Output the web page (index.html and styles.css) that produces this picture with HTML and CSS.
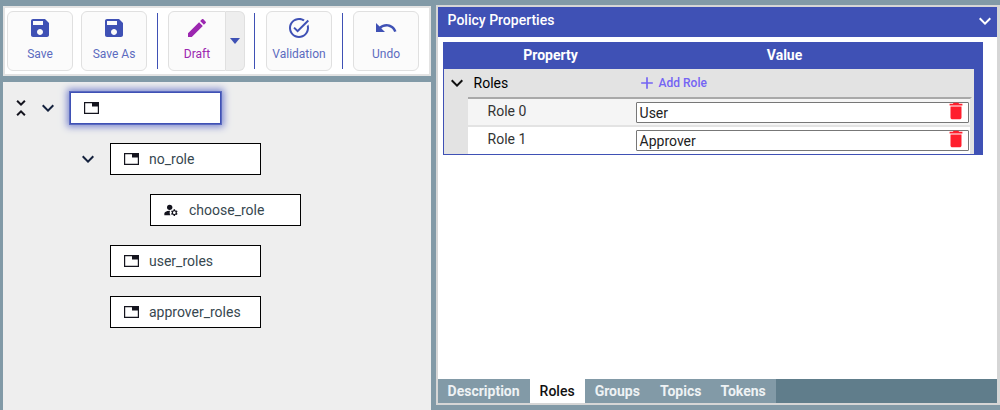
FILE: index.html
```html
<!DOCTYPE html>
<html lang="en">
<head>
  <meta charset="UTF-8" />
  <title>Policy Editor</title>
  <link rel="stylesheet" href="styles.css">
</head>
<body>
  <svg class="defs" width="0" height="0">
    <symbol id="i-save" viewBox="0 0 24 24"><path d="M17 3H5c-1.11 0-2 .9-2 2v14c0 1.1.89 2 2 2h14c1.1 0 2-.9 2-2V7l-4-4zm-5 16c-1.66 0-3-1.34-3-3s1.34-3 3-3 3 1.34 3 3-1.34 3-3 3zm3-10H5V5h10v4z"/></symbol>
    <symbol id="i-edit" viewBox="0 0 24 24"><path d="M3 17.25V21h3.75L17.81 9.94l-3.75-3.75L3 17.25zM20.71 7.04c.39-.39.39-1.02 0-1.41l-2.34-2.34c-.39-.39-1.02-.39-1.41 0l-1.83 1.83 3.75 3.75 1.83-1.83z"/></symbol>
    <symbol id="i-check" viewBox="0 0 24 24"><path d="M22 5.18L10.59 16.6l-4.24-4.24 1.41-1.41 2.83 2.83 10-10L22 5.18zm-2.21 5.04c.13.57.21 1.17.21 1.78 0 4.42-3.58 8-8 8s-8-3.58-8-8 3.58-8 8-8c1.58 0 3.04.46 4.28 1.25l1.44-1.44C16.1 2.67 14.13 2 12 2 6.48 2 2 6.48 2 12s4.48 10 10 10 10-4.48 10-10c0-1.19-.22-2.33-.6-3.39l-1.61 1.61z"/></symbol>
    <symbol id="i-undo" viewBox="0 0 24 24"><path d="M12.5 8c-2.65 0-5.05.99-6.9 2.6L2 7v9h9l-3.62-3.62c1.39-1.16 3.16-1.88 5.12-1.88 3.54 0 6.55 2.31 7.6 5.5l2.37-.78C21.08 11.03 17.15 8 12.5 8z"/></symbol>
    <symbol id="i-chevron" viewBox="0 0 24 24"><path d="M16.59 8.59L12 13.17 7.41 8.59 6 10l6 6 6-6z"/></symbol>
    <symbol id="i-collapse" viewBox="0 0 24 24"><path d="M7.41 18.59L8.83 20 12 16.83 15.17 20l1.41-1.41L12 14l-4.59 4.59zm9.18-13.18L15.17 4 12 7.17 8.83 4 7.41 5.41 12 10l4.59-4.59z"/></symbol>
    <symbol id="i-add" viewBox="0 0 24 24"><path d="M19 13h-6v6h-2v-6H5v-2h6V5h2v6h6v2z"/></symbol>
    <symbol id="i-delete" viewBox="0 0 24 24"><path d="M6 19c0 1.1.9 2 2 2h8c1.1 0 2-.9 2-2V7H6v12zM19 4h-3.5l-1-1h-5l-1 1H5v2h14V4z"/></symbol>
    <symbol id="i-node" viewBox="0 0 15 12"><path d="M0 0h15v12H0zM1.2 1.2v9.6h12.6V4.5H8V1.2z" fill-rule="evenodd"/></symbol>
    <symbol id="i-manage" viewBox="0 0 24 24"><circle cx="10" cy="8" r="4"/><path d="M10.67 13.02c-.22-.01-.44-.02-.67-.02-2.42 0-4.68.67-6.61 1.82-.88.52-1.39 1.5-1.39 2.53V20h9.26c-.79-1.13-1.26-2.51-1.26-4 0-1.07.25-2.07.67-2.98z"/><path d="M20.75 16c0-.22-.03-.42-.06-.63l1.14-1.01-1-1.73-1.45.49c-.32-.27-.68-.48-1.08-.63L18 11h-2l-.3 1.49c-.4.15-.76.36-1.08.63l-1.45-.49-1 1.73 1.14 1.01c-.03.21-.06.41-.06.63s.03.42.06.63l-1.14 1.01 1 1.73 1.45-.49c.32.27.68.48 1.08.63L16 21h2l.3-1.49c.4-.15.76-.36 1.08-.63l1.45.49 1-1.73-1.14-1.01c.03-.21.06-.41.06-.63zM17 18c-1.1 0-2-.9-2-2s.9-2 2-2 2 .9 2 2-.9 2-2 2z"/></symbol>
  </svg>

  <div class="left">
    <div class="toolbar">
      <button class="tool"><svg class="tool-icon"><use href="#i-save"/></svg>Save</button>
      <button class="tool"><svg class="tool-icon"><use href="#i-save"/></svg>Save As</button>
      <span class="sep"></span>
      <div class="split">
        <button class="tool tool-draft"><svg class="tool-icon"><use href="#i-edit"/></svg>Draft</button>
        <button class="split-arrow"><span class="caret"></span></button>
      </div>
      <span class="sep"></span>
      <button class="tool"><svg class="tool-icon"><use href="#i-check"/></svg>Validation</button>
      <span class="sep"></span>
      <button class="tool"><svg class="tool-icon"><use href="#i-undo"/></svg>Undo</button>
    </div>

    <div class="tree">
      <div class="tree-row">
        <svg class="collapse-all"><use href="#i-collapse"/></svg>
        <svg class="toggle"><use href="#i-chevron"/></svg>
        <div class="node node-selected"><svg class="node-icon"><use href="#i-node"/></svg></div>
      </div>
      <div class="tree-row level-1">
        <svg class="toggle"><use href="#i-chevron"/></svg>
        <div class="node"><svg class="node-icon"><use href="#i-node"/></svg>no_role</div>
      </div>
      <div class="tree-row level-2">
        <div class="node"><svg class="node-icon node-icon-role"><use href="#i-manage"/></svg>choose_role</div>
      </div>
      <div class="tree-row level-1b">
        <div class="node"><svg class="node-icon"><use href="#i-node"/></svg>user_roles</div>
      </div>
      <div class="tree-row level-1b">
        <div class="node"><svg class="node-icon"><use href="#i-node"/></svg>approver_roles</div>
      </div>
    </div>
  </div>

  <div class="props">
    <div class="props-head">
      <span>Policy Properties</span>
      <svg class="props-chevron"><use href="#i-chevron"/></svg>
    </div>
    <div class="props-body">
      <div class="grid">
        <div class="grid-head">
          <div class="head-prop">Property</div>
          <div class="head-value">Value</div>
        </div>
        <div class="group">
          <div class="group-row">
            <svg class="group-toggle"><use href="#i-chevron"/></svg>
            <span class="group-name">Roles</span>
            <span class="add-role"><svg class="add-icon"><use href="#i-add"/></svg>Add Role</span>
          </div>
          <div class="rows">
            <div class="row row-odd">
              <div class="row-name">Role 0</div>
              <div class="row-value">
                <div class="input"><span>User</span><svg class="trash"><use href="#i-delete"/></svg></div>
              </div>
            </div>
            <div class="row">
              <div class="row-name">Role 1</div>
              <div class="row-value">
                <div class="input"><span>Approver</span><svg class="trash"><use href="#i-delete"/></svg></div>
              </div>
            </div>
          </div>
        </div>
      </div>
    </div>
    <div class="tabs">
      <div class="tab">Description</div>
      <div class="tab tab-active">Roles</div>
      <div class="tab">Groups</div>
      <div class="tab">Topics</div>
      <div class="tab">Tokens</div>
    </div>
  </div>
</body>
</html>
```

FILE: styles.css
```css
html, body {
  height: 100%;
}

body {
  margin: 0;
  width: 1000px;
  height: 410px;
  overflow: hidden;
  display: flex;
  background: #829aa7;
  font-family: Roboto, sans-serif;
  font-size: 14px;
}

.defs {
  position: absolute;
}

.left {
  width: 428px;
  margin-left: 3px;
  padding-top: 6px;
  display: flex;
  flex-direction: column;
  gap: 6px;
}

/* toolbar */
.toolbar {
  height: 66px;
  border: 2px solid #e3e3e3;
  background: white;
  display: flex;
  align-items: center;
  padding-left: 2px;
}

.tool {
  width: 66px;
  height: 60px;
  margin-right: 8px;
  padding: 4px 0 0;
  display: flex;
  flex-direction: column;
  align-items: center;
  gap: 7px;
  border: 1px solid #e0e0e0;
  border-radius: 6px;
  background: #fbfbfb;
  color: #5c6bc0;
  font-family: Roboto, sans-serif;
  font-size: 12px;
}

.tool-icon {
  width: 24px;
  height: 24px;
  fill: #3f51b5;
}

.sep {
  width: 1px;
  height: 56px;
  background: #3f51b5;
  margin: 0 10px 0 2px;
}

.split {
  display: flex;
  margin-right: 7px;
}

.split + .sep {
  margin-right: 11px;
}

.tool-draft {
  width: 58px;
  margin: 0;
  border-radius: 6px 0 0 6px;
  color: #9c27b0;
}

.tool-draft .tool-icon {
  fill: #9c27b0;
}

.split-arrow {
  width: 19px;
  height: 60px;
  padding: 0 1px 0 0;
  border: 1px solid #e0e0e0;
  border-left: none;
  border-radius: 0 6px 6px 0;
  background: #eeeeee;
  display: flex;
  align-items: center;
  justify-content: center;
}

.caret {
  border-left: 5.5px solid transparent;
  border-right: 5.5px solid transparent;
  border-top: 6px solid #3f51b5;
}

/* tree */
.tree {
  flex: 1;
  background: #eeeeee;
  padding-top: 10px;
  display: flex;
  flex-direction: column;
  gap: 19px;
}

.tree-row {
  height: 32px;
  display: flex;
  align-items: center;
}

.level-1 {
  padding-left: 73px;
}

.level-2 {
  padding-left: 147px;
}

.level-1b {
  padding-left: 107px;
}

.collapse-all {
  width: 24px;
  height: 24px;
  margin-left: 6px;
  fill: #14141e;
}

.toggle {
  width: 24px;
  height: 24px;
  margin: 0 10px 0 3px;
  fill: #14213d;
}

.level-1 .toggle {
  margin: 0 10px 0 0;
}

.node {
  width: 151px;
  height: 32px;
  box-sizing: border-box;
  border: 1px solid black;
  background: white;
  display: flex;
  align-items: center;
  padding-left: 13px;
  color: #37474f;
}

.node-selected {
  border-color: #3f51b5;
  box-shadow: 0 0 0 1px #5c6bc0, 0 0 7px 3px #7f8ad0;
}

.node-icon {
  width: 15px;
  height: 12px;
  margin-right: 10px;
  fill: #14141e;
  flex: none;
}

.node-icon-role {
  width: 16px;
  height: 16px;
  margin: 0 10px 0 -1px;
}

/* properties */
.props {
  width: 560px;
  height: 396px;
  margin: 5px 0 0 5px;
  border: 2px solid #d6d6d6;
  border-right-width: 3px;
  background: white;
  display: flex;
  flex-direction: column;
}

.props-head {
  height: 30px;
  flex: none;
  background: #3f51b5;
  color: white;
  font-weight: 500;
  display: flex;
  align-items: center;
  justify-content: space-between;
  padding: 0 0 4px 10px;
  box-sizing: border-box;
}

.props-chevron {
  width: 24px;
  height: 24px;
  margin-top: 1px;
  fill: white;
}

.props-body {
  flex: 1;
  padding: 5px 0 0 5px;
}

.grid {
  width: 540px;
  background: #3f51b5;
  padding-bottom: 1px;
}

.grid-head {
  height: 27px;
  box-sizing: border-box;
  padding-bottom: 2px;
  display: flex;
  align-items: center;
  color: white;
  font-weight: 700;
}

.head-prop {
  width: 216px;
  text-align: center;
}

.head-value {
  width: 252px;
  text-align: center;
}

.group {
  width: 530px;
  margin-left: 1px;
  background: #e3e3e3;
}

.group-row {
  height: 28px;
  display: flex;
  align-items: center;
}

.group-toggle {
  width: 24px;
  height: 24px;
  margin-left: 1px;
  fill: #111;
}

.group-name {
  margin-left: 5px;
  width: 163px;
  color: #000;
}

.add-role {
  display: flex;
  align-items: center;
  font-size: 12px;
  font-weight: 500;
  color: #7464f4;
}

.add-icon {
  width: 20px;
  height: 20px;
  margin-right: 2px;
  fill: #7464f4;
}

.rows {
  margin-left: 24px;
  padding-right: 2px;
}

.row {
  height: 28px;
  display: flex;
  background: white;
  border-bottom: 2px solid #e3e3e3;
  border-right: 2px solid #e3e3e3;
  box-sizing: border-box;
}

.row:last-child {
  border-bottom: none;
  height: 27px;
}

.row-odd {
  background: #f5f5f5;
  border-top: 2px solid #a9a9a9;
  height: 30px;
}

.row-name {
  width: 165px;
  padding: 4px 0 0 20px;
  box-sizing: border-box;
  color: #333;
  flex: none;
}

.row-value {
  flex: 1;
  margin-left: 2px;
  padding: 3px 1px 0;
  background: inherit;
}

.input {
  height: 21px;
  box-sizing: border-box;
  border: 1px solid #777;
  border-radius: 1px;
  background: white;
  display: flex;
  align-items: center;
  justify-content: space-between;
  padding-left: 3px;
  color: #222;
}

.trash {
  width: 22px;
  height: 22px;
  margin: -3px 1px 0 0;
  fill: #ff1e2d;
  flex: none;
}

/* tabs */
.tabs {
  height: 24px;
  flex: none;
  background: #607d8b;
  display: flex;
}

.tab {
  padding: 0 10px;
  line-height: 24px;
  background: #829aa7;
  color: #eef2f4;
  font-weight: 700;
}

.tab:last-child {
  padding-left: 9px;
}

.tab-active {
  background: white;
  color: #111;
  font-weight: 500;
}
```
